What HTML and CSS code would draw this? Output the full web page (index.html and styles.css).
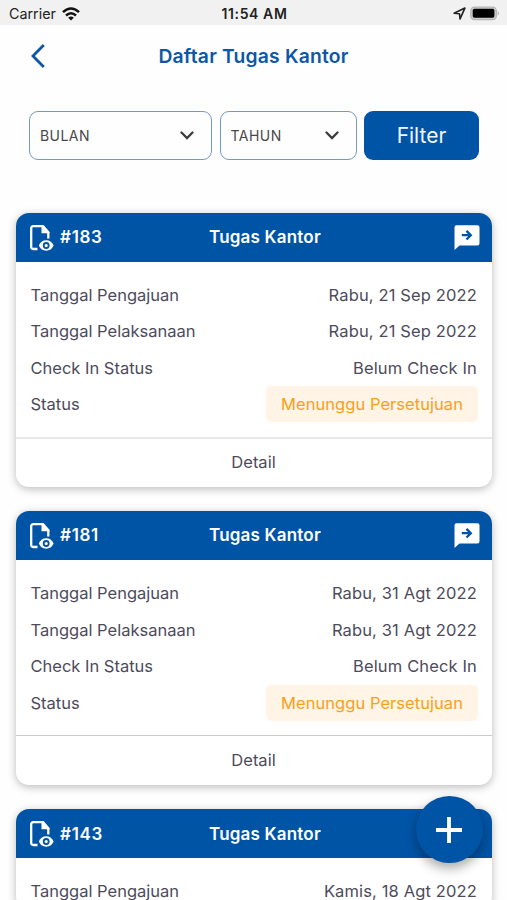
FILE: index.html
```html
<!DOCTYPE html>
<html lang="id">
<head>
<meta charset="utf-8">
<meta name="viewport" content="width=device-width, initial-scale=1">
<title>Daftar Tugas Kantor</title>
<link rel="stylesheet" href="styles.css">
</head>
<body>
<svg class="sprite" aria-hidden="true">
  <symbol id="doc" viewBox="0 0 24 26">
    <path d="M7.500 24H3.300Q1.200 24 1.200 22V3.300Q1.200 1.200 3.300 1.200H12.500L18.300 7.500V13.500" fill="none" stroke="#fff" stroke-width="2.300"/>
    <path d="M11.500 1V8.200H19.500V7L13.500 .1Z" fill="#fff"/>
    <path d="M8.800 20.500Q11.200 15.300 16.200 15.300T23.600 20.500Q21.200 25.700 16.200 25.700T8.800 20.500Z" fill="#fff"/>
    <circle cx="16.200" cy="20.500" r="2.500" fill="#fff" stroke="#0054a6" stroke-width="1.800"/>
  </symbol>
  <symbol id="message" viewBox="0 0 26 26">
    <path d="M2.500 .3H23.500Q25.500 .3 25.500 2.300V18.500Q25.500 20.500 23.500 20.500H5.500L.5 25V2.300Q.5 .3 2.500 .3Z" fill="#fff"/>
    <path d="M7.800 10.200H16.500M12.500 5.900L16.800 10.200L12.500 14.500" fill="none" stroke="#0054a6" stroke-width="2.300"/>
  </symbol>
</svg>
<header class="statusbar">
  <div class="carrier">
    <span>Carrier</span>
    <svg class="wifi" viewBox="0 0 18 14"><g fill="none" stroke="#111" stroke-width="2.500"><path d="M1 5.200Q9-2.200 17 5.200"/><path d="M4 8.500Q9 4 14 8.500"/></g><path d="M6.200 10.700Q9 8.400 11.800 10.700L9 13.600Z" fill="#111"/></svg>
  </div>
  <span class="clock">11:54 AM</span>
  <div class="indicators">
    <svg class="location" viewBox="0 0 12 12"><path d="M1 5.800L11 1L6.500 11L6 6.200Z" fill="none" stroke="#222" stroke-width="1.500" stroke-linejoin="round"/></svg>
    <svg class="battery" viewBox="0 0 31 15"><rect x=".8" y=".8" width="26.400" height="13" rx="3.800" fill="#ccc" stroke="#b5b5b5" stroke-width="1.300"/><rect x="2.800" y="2.700" width="22.400" height="9.200" rx="1.800"/><path d="M28.600 5Q31 7.300 28.600 9.700Z" fill="#aaa"/></svg>
  </div>
</header>
<nav class="navbar">
  <svg class="back" viewBox="0 0 14 24"><path d="M12.800 1L2 12L12.800 23" fill="none" stroke="#0d57a7" stroke-width="2.800"/></svg>
  <h1>Daftar Tugas Kantor</h1>
</nav>
<section class="filters">
  <div class="select"><span>BULAN</span><svg class="chevron" viewBox="0 0 14 9"><path d="M1.500 1.500L7 7L12.500 1.500" fill="none" stroke="#3c3c3c" stroke-width="2.300" stroke-linecap="round"/></svg></div>
  <div class="select"><span>TAHUN</span><svg class="chevron" viewBox="0 0 14 9"><path d="M1.500 1.500L7 7L12.500 1.500" fill="none" stroke="#3c3c3c" stroke-width="2.300" stroke-linecap="round"/></svg></div>
  <button class="filter">Filter</button>
</section>
<main class="list">
  <article class="card">
    <header class="card-head"><div class="number"><svg class="doc"><use href="#doc"/></svg><span>#183</span></div><h2>Tugas Kantor</h2><svg class="message"><use href="#message"/></svg></header>
    <dl class="details">
      <div class="row"><dt>Tanggal Pengajuan</dt><dd>Rabu, 21 Sep 2022</dd></div>
      <div class="row"><dt>Tanggal Pelaksanaan</dt><dd>Rabu, 21 Sep 2022</dd></div>
      <div class="row"><dt>Check In Status</dt><dd>Belum Check In</dd></div>
      <div class="row"><dt>Status</dt><dd class="badge">Menunggu Persetujuan</dd></div>
    </dl>
    <footer class="card-foot soft">Detail</footer>
  </article>
  <article class="card">
    <header class="card-head"><div class="number"><svg class="doc"><use href="#doc"/></svg><span>#181</span></div><h2>Tugas Kantor</h2><svg class="message"><use href="#message"/></svg></header>
    <dl class="details">
      <div class="row"><dt>Tanggal Pengajuan</dt><dd>Rabu, 31 Agt 2022</dd></div>
      <div class="row"><dt>Tanggal Pelaksanaan</dt><dd>Rabu, 31 Agt 2022</dd></div>
      <div class="row"><dt>Check In Status</dt><dd>Belum Check In</dd></div>
      <div class="row"><dt>Status</dt><dd class="badge">Menunggu Persetujuan</dd></div>
    </dl>
    <footer class="card-foot">Detail</footer>
  </article>
  <article class="card">
    <header class="card-head"><div class="number"><svg class="doc"><use href="#doc"/></svg><span>#143</span></div><h2>Tugas Kantor</h2><svg class="message"><use href="#message"/></svg></header>
    <dl class="details last">
      <div class="row"><dt>Tanggal Pengajuan</dt><dd>Kamis, 18 Agt 2022</dd></div>
    </dl>
  </article>
</main>
<button class="add" aria-label="Tambah"><svg viewBox="0 0 28 28"><path d="M14 1V27M1 14H27" stroke="#fff" stroke-width="3.800"/></svg></button>
</body>
</html>
```
FILE: styles.css
```css
* { box-sizing: border-box; }
body {
  margin: 0;
  height: 900px;
  overflow: hidden;
  background: #fefefe;
  color: #4d4b5b;
  font-family: Inter, "Liberation Sans", sans-serif;
  font-size: 16.500px;
}
h1, h2, dl, dd { margin: 0; }
svg { display: block; flex: none; }
button { border: 0; padding: 0; font-family: inherit; }
.sprite { position: absolute; width: 0; height: 0; }

.statusbar {
  display: grid;
  grid-template-columns: 1fr auto 1fr;
  align-items: center;
  height: 25px;
  padding: 2px 7px 0 9px;
  background: #f1f1f1;
  color: #222;
  font-size: 14.300px;
}
.carrier { display: flex; align-items: center; gap: 6px; }
.wifi { width: 18px; height: 14px; }
.clock { font-size: 14px; font-weight: 600; letter-spacing: .600px; }
.indicators { display: flex; justify-content: flex-end; align-items: center; gap: 4px; }
.location { width: 13px; height: 13px; }
.battery { width: 30px; height: 15px; }

.navbar {
  display: grid;
  grid-template-columns: 31px 1fr 31px;
  align-items: center;
  height: 61px;
}
.back { width: 14px; height: 24px; margin-left: 31px; }
h1 { color: #0d57a7; font-size: 19.300px; font-weight: 600; letter-spacing: .200px; text-align: center; }

.filters {
  display: grid;
  grid-template-columns: 183px 137px 115px;
  column-gap: 7.500px;
  height: 49px;
  margin: 25px 28px 0 29px;
}
.select {
  display: flex;
  align-items: center;
  justify-content: space-between;
  padding: 0 17px 0 10px;
  border: 1.500px solid #7598c8;
  border-radius: 9px;
  color: #484848;
  font-size: 14px;
  letter-spacing: .450px;
}
.chevron { width: 14px; height: 9px; }
.filter { border-radius: 9px; background: #0054a6; color: #f2f6fb; font-size: 21px; }

.list { display: grid; gap: 24.400px; margin: 52.600px 15px 0 16px; }
.card {
  border-radius: 13px;
  background: #fff;
  box-shadow: 0 2px 8px rgba(0, 0, 0, .27);
}
.card-head {
  display: grid;
  grid-template-columns: 179px auto 1fr;
  align-items: center;
  height: 49px;
  padding: 0 12px 0 14px;
  border-radius: 13px 13px 0 0;
  background: #0054a6;
  color: #fff;
}
.number { display: flex; align-items: center; gap: 6px; font-size: 17px; font-weight: 600; letter-spacing: .700px; }
.doc { width: 24px; height: 26px; margin-top: 1px; }
h2 { font-size: 17px; font-weight: 600; letter-spacing: .200px; }
.message { width: 26px; height: 26px; margin-top: 1px; justify-self: end; }
.details { height: 175px; padding: 14.700px 15px 0 14.500px; }
.last { height: 51px; }
.row { display: flex; justify-content: space-between; align-items: center; height: 36.600px; }
dd { letter-spacing: .140px; }
.badge {
  width: 212px;
  margin-right: -1px;
  padding: 8px 0;
  border-radius: 5px;
  background: #fff4e5;
  color: #f9a01b;
  letter-spacing: .050px;
  line-height: 20px;
  text-align: center;
}
.card-foot {
  display: grid;
  place-items: center;
  height: 50px;
  padding: 0 1px 1px 0;
  border-top: 1px solid #ccc;
}
.soft { border-top: 2px solid #e9e9e9; }

.add {
  position: fixed;
  right: 24.500px;
  top: 796px;
  display: grid;
  place-items: center;
  width: 67px;
  height: 67px;
  border-radius: 50%;
  background: #0054a6;
  box-shadow: 0 5px 12px rgba(0, 0, 0, .35);
}
.add svg { width: 28px; height: 28px; }
```
